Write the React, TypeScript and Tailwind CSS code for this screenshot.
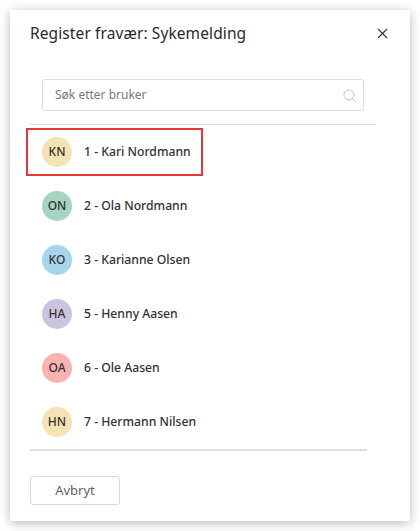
import { Search, X } from 'lucide-react';

const users = [
  { id: 1, name: 'Kari Nordmann', initials: 'KN', color: 'bg-[#f6e3b4]' },
  { id: 2, name: 'Ola Nordmann', initials: 'ON', color: 'bg-[#a4d4c2]' },
  { id: 3, name: 'Karianne Olsen', initials: 'KO', color: 'bg-[#a9d5ec]' },
  { id: 5, name: 'Henny Aasen', initials: 'HA', color: 'bg-[#cbc3e0]' },
  { id: 6, name: 'Ole Aasen', initials: 'OA', color: 'bg-[#fbb2b2]' },
  { id: 7, name: 'Hermann Nilsen', initials: 'HN', color: 'bg-[#f6e3b4]' },
];

export default function App() {
  return (
    <div className="min-h-[531px] bg-white p-[10px] font-['Noto_Sans',sans-serif] text-[#2b2b2b]">
      <div className="h-[511px] w-[400px] bg-white shadow-[0_2px_10px_rgba(0,0,0,0.28)]">
        {/* header */}
        <div className="flex items-center justify-between pl-5 pr-[19px] pt-[11px]">
          <h2 className="text-[15.5px] leading-6 tracking-[0.1px]">Register fravær: Sykemelding</h2>
          <X className="h-[17px] w-[17px] text-[#333]" strokeWidth={1.6} />
        </div>

        <div className="ml-5 mr-[34px] mt-[34px]">
          <div className="mx-3 flex h-8 items-center rounded-[3px] border border-[#dcdcdc] pl-3 pr-[6px]">
            <span className="flex-1 text-[12px] text-[#7a7a7a]">Søk etter bruker</span>
            <Search className="h-[15px] w-[15px] text-[#b7bfcf]" strokeWidth={1.4} />
          </div>
          <div className="mt-[13px] border-t border-[#dadada]" />

          <ul>
            {users.map((u, i) => (
              <li key={u.id} className="flex h-[54px] items-center">
                <div
                  className={
                    i === 0
                      ? '-ml-1 flex h-12 w-[177px] items-center border-2 border-[#e53935] pl-[14px]'
                      : '-ml-1 flex h-12 items-center border-2 border-transparent pl-[14px]'
                  }
                >
                  <span
                    className={`flex h-[30px] w-[30px] items-center justify-center rounded-full text-[12px] font-medium text-[#333] ${u.color}`}
                  >
                    {u.initials}
                  </span>
                  <span className="ml-3 text-[12.2px] font-medium text-[#333]">
                    {u.id} - {u.name}
                  </span>
                </div>
              </li>
            ))}
          </ul>
        </div>

        <div className="ml-5 mr-[43px] border-t-2 border-[#dedede]" />

        <div className="px-5 pt-[25px]">
          <button className="h-[29px] w-[90px] rounded-[3px] border border-[#d9d9d9] bg-white text-[13px] text-[#5b6272]">
            Avbryt
          </button>
        </div>
      </div>
    </div>
  );
}
